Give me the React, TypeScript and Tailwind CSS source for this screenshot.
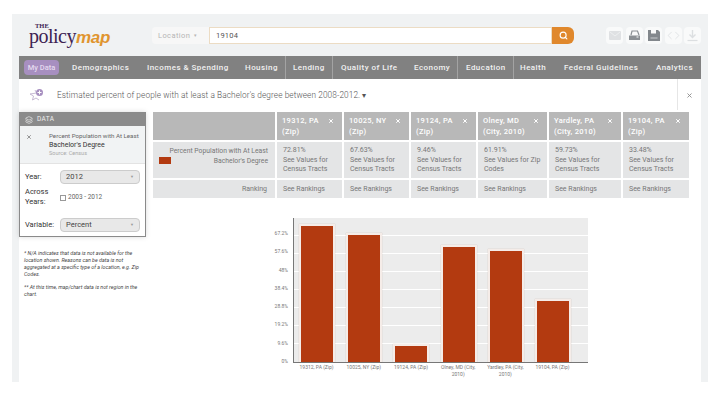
import type { ReactNode } from "react";
import { Search, Code, X, Layers } from "lucide-react";

const NAV = [
  { label: "Demographics", cls: "w-[79px] pl-[13px]" },
  { label: "Incomes & Spending", cls: "w-[99px] pl-[9px]" },
  { label: "Housing", cls: "w-[49px] pl-[8px] border-r border-[#a3a3a3]" },
  { label: "Lending", cls: "w-[47px] pl-[7px] border-r border-[#a3a3a3]" },
  { label: "Quality of Life", cls: "w-[73px] pl-[8px]" },
  { label: "Economy", cls: "w-[52px] pl-[8px] border-r border-[#a3a3a3]" },
  { label: "Education", cls: "w-[56px] pl-[8px] border-r border-[#a3a3a3]" },
  { label: "Health", cls: "w-[42px] pl-[6px]" },
  { label: "Federal Guidelines", cls: "w-[92px] pl-[8px]" },
  { label: "Analytics", cls: "w-[54px] pl-[8px]" },
];

const COLS = [
  { name: "19312, PA", sub: "(Zip)", value: "72.81%", note: "See Values for Census Tracts", w: "w-[65px]" },
  { name: "10025, NY", sub: "(Zip)", value: "67.63%", note: "See Values for Census Tracts", w: "w-[65px]" },
  { name: "19124, PA", sub: "(Zip)", value: "9.46%", note: "See Values for Census Tracts", w: "w-[65px]" },
  { name: "Olney, MD", sub: "(City, 2010)", value: "61.91%", note: "See Values for Zip Codes", w: "w-[69px]" },
  { name: "Yardley, PA", sub: "(City, 2010)", value: "59.73%", note: "See Values for Census Tracts", w: "w-[72px]" },
  { name: "19104, PA", sub: "(Zip)", value: "33.48%", note: "See Values for Census Tracts", w: "w-[66px]" },
];

const BARS = [
  { label: "19312, PA (Zip)", h: "h-[138px]" },
  { label: "10025, NY (Zip)", h: "h-[129px]" },
  { label: "19124, PA (Zip)", h: "h-[18px]" },
  { label: "Olney, MD (City, 2010)", h: "h-[117px]" },
  { label: "Yardley, PA (City, 2010)", h: "h-[113px]" },
  { label: "19104, PA (Zip)", h: "h-[63px]" },
];

const TICKS = ["67.2%", "57.6%", "48%", "38.4%", "28.8%", "19.2%", "9.6%", "0%"];

const ToolButton = ({ children }: { children: ReactNode }) => (
  <div className="w-[17px] h-[17px] rounded-sm bg-[#f9fafa] flex items-center justify-center text-[#dcdfe1]">
    {children}
  </div>
);

export default function App() {
  return (
    <div className="w-[720px] h-[405px] bg-white pt-[14px] px-[12px] overflow-hidden font-['Roboto',sans-serif]">
      <div className="w-[696px] h-[368px] bg-[#f0f2f3] flex flex-col">
        {/* top bar */}
        <div className="h-[42px] flex items-center shrink-0 relative">
          <div className="w-[140px] pl-[17px] relative h-full">
            <div className="absolute left-[23px] top-[9px] text-[6.5px] leading-[5px] font-bold text-[#3d2352] font-['Liberation_Serif',serif]">THE</div>
            <div className="pt-[14px] text-[20px] leading-[16px] tracking-[-0.5px] text-[#3d2352] font-['Liberation_Serif',serif]">
              policy<span className="italic font-bold text-[17px] tracking-[-0.3px] text-[#e0952f] font-['Liberation_Sans',sans-serif]">map</span>
            </div>
          </div>
          <div className="flex items-center h-[17px] w-[57px] mt-[1px] bg-[#f7f7f7] rounded-l-sm text-[#b5b5b5] text-[7.5px] tracking-[0.4px] pl-[6px]">
            Location <span className="ml-[4px] text-[5px]">▾</span>
          </div>
          <div className="h-[17px] w-[343px] mt-[1px] bg-white border border-[#ecdcc4] flex items-center pl-[6px] text-[7.5px] tracking-[0.2px] text-[#555]">
            19104
          </div>
          <div className="h-[17px] w-[22px] mt-[1px] bg-[#e0882c] rounded-r-md flex items-center justify-center text-white">
            <Search size={9} strokeWidth={3} />
          </div>
          <div className="flex gap-[2.5px] ml-[32px] mt-[1px]">
            <ToolButton>
              <svg width="12" height="9" viewBox="0 0 12 9"><rect width="12" height="9" rx="1" fill="#dfe1e3" /><path d="M1 1l5 4 5-4" fill="none" stroke="#eef0f1" strokeWidth="1" /></svg>
            </ToolButton>
            <ToolButton>
              <svg width="13" height="11" viewBox="0 0 13 11"><path d="M3 5L4 1h5.5L11 5" fill="none" stroke="#8b9094" strokeWidth="1.2" /><path d="M1 5.5h11V10H1z" fill="#8b9094" /><rect x="8.5" y="6.5" width="2" height="1" fill="#f9fafa" /></svg>
            </ToolButton>
            <ToolButton>
              <svg width="12" height="11" viewBox="0 0 12 11"><path d="M0 0h10l2 2v9H0z" fill="#82878c" /><rect x="3" y="0" width="5" height="3.5" fill="#f9fafa" /><rect x="2.5" y="7" width="7" height="2" fill="#a5a9ad" /></svg>
            </ToolButton>
            <ToolButton><Code size={13} strokeWidth={1.5} /></ToolButton>
            <ToolButton>
              <svg width="11" height="12" viewBox="0 0 11 12"><path d="M5.5 0v7M2.5 4.5l3 3 3-3" fill="none" stroke="#dcdfe1" strokeWidth="1.4" /><path d="M0.5 10.5h10" stroke="#dcdfe1" strokeWidth="1.2" /></svg>
            </ToolButton>
          </div>
        </div>

        <div className="pl-[7px] pr-[7px] flex-1 flex flex-col min-h-0">
          {/* nav */}
          <div className="h-[23px] bg-[#818181] flex items-center text-[8px] font-medium tracking-[0.45px] text-[#f1f1f1] shrink-0">
            <div className="ml-[5px] w-[35px] h-[15px] shrink-0 rounded-sm bg-[#a78fc0] text-[#e4d9ee] flex items-center justify-center text-[7.5px] tracking-normal">My Data</div>
            {NAV.map((n) => (
              <div key={n.label} className={`${n.cls} shrink-0 h-full flex items-center whitespace-nowrap`}>
                {n.label}
              </div>
            ))}
          </div>

          <div className="bg-white flex-1 flex flex-col min-h-0">
            {/* description */}
            <div className="h-[31px] flex items-center shrink-0 relative">
              <svg width="15" height="13" viewBox="0 0 15 13" className="ml-[10px] mr-[13px]">
                <path d="M6 2 L7.5 5 L1 6 L4.5 8 L3.5 12 L7 10 L10 12" fill="none" stroke="#b9a9c9" strokeWidth="0.8" />
                <circle cx="10.5" cy="4.5" r="3.5" fill="#a78fc0" />
                <path d="M8.5 4.5h4M10.5 2.5v4" stroke="white" strokeWidth="1" />
              </svg>
              <span className="text-[8.25px] font-light tracking-[0.1px] text-[#555] mt-[1px]">Estimated percent of people with at least a Bachelor's degree between 2008-2012. ▾</span>
              <div className="absolute right-0 top-0 h-full w-[24px] border-l border-[#e6e6e6] flex items-center justify-center text-[#8a8a8a]">
                <X size={7} strokeWidth={3} className="mt-[1px]" />
              </div>
            </div>

            <div className="flex flex-1 min-h-0 pt-[2px]">
              {/* left column */}
              <div className="w-[134px] shrink-0">
                <div className="w-[127px] border border-[#8a8a8a] shadow-[0_0_5px_rgba(0,0,0,0.15)]">
                  <div className="h-[13px] bg-[#8b8b8b] flex items-center pl-[5px] text-[6.5px] tracking-[0.4px] text-[#eee] gap-[3px]">
                    <Layers size={8} /> <span className="ml-[1px]">DATA</span>
                  </div>
                  <div className="h-[38px] bg-[#f1f3f4] flex text-[6.2px] leading-[8.5px] text-[#666] border-b border-[#e3e3e3]">
                    <X size={6} strokeWidth={3} className="ml-[6px] mt-[8px] mr-[17px] text-[#777] shrink-0" />
                    <div className="pt-[6px]">
                      <div>Percent Population with At Least</div>
                      <div className="text-[7px] text-[#333]">Bachelor's Degree</div>
                      <div className="text-[5.5px] text-[#aaa]">Source: Census</div>
                    </div>
                  </div>
                  <div className="h-[72px] bg-white text-[7.5px] text-[#333] pl-[5px] pt-[6px]">
                    <div className="flex items-center h-[14px]">
                      <span className="w-[35px]">Year:</span>
                      <div className="w-[80px] h-[14px] rounded-sm bg-[#e8e8e8] border border-[#ccc] flex items-center justify-between px-[5px] text-[#444]">
                        2012 <span className="text-[4px] text-[#999]">▼</span>
                      </div>
                    </div>
                    <div className="flex h-[34px] pt-[3px] leading-[9.5px]">
                      <span className="w-[35px]">Across Years:</span>
                      <div className="flex items-center h-[10px] mt-[6px] gap-[2px] text-[6.5px] text-[#666]">
                        <div className="w-[6px] h-[6px] border border-[#999] bg-white" /> 2003 - 2012
                      </div>
                    </div>
                    <div className="flex items-center h-[14px]">
                      <span className="w-[35px]">Variable:</span>
                      <div className="w-[80px] h-[14px] rounded-sm bg-[#e8e8e8] border border-[#ccc] flex items-center justify-between px-[5px] text-[#444]">
                        Percent <span className="text-[4px] text-[#999]">▼</span>
                      </div>
                    </div>
                  </div>
                </div>
                <div className="mt-[13px] pl-[5px] pr-[12px] italic text-[5.3px] leading-[7px] text-[#444]">
                  <p>* N/A indicates that data is not available for the location shown. Reasons can be data is not aggregated at a specific type of a location, e.g. Zip Codes.</p>
                  <p className="mt-[6px]">** At this time, map/chart data is not region in the chart.</p>
                </div>
              </div>

              {/* right column */}
              <div className="flex-1 min-w-0">
                <div className="flex gap-[2px]">
                  <div className="w-[122px] flex flex-col gap-[2px] shrink-0">
                    <div className="h-[28px] bg-[#b8b8b8]" />
                    <div className="h-[36px] bg-[#e4e5e6] relative pt-[5px] pr-[7px] text-right text-[6.8px] leading-[9.5px] text-[#777]">
                      <div className="absolute left-[6px] top-[15px] w-[12px] h-[7px] bg-[#b33a10]" />
                      Percent Population with At Least<br />Bachelor's Degree
                    </div>
                    <div className="h-[18px] bg-[#e4e5e6] flex items-center justify-end pr-[8px] text-[7px] text-[#777]">Ranking</div>
                  </div>
                  {COLS.map((c) => (
                    <div key={c.name} className={`${c.w} shrink-0 flex flex-col gap-[2px]`}>
                      <div className="h-[28px] bg-[#b8b8b8] text-white font-medium text-[7.5px] leading-[10.5px] tracking-[0.3px] pl-[5px] pt-[4px] relative">
                        {c.name}<br />{c.sub}
                        <X size={6} strokeWidth={4} className="absolute right-[8px] top-[6px]" />
                      </div>
                      <div className="h-[36px] bg-[#e4e5e6] pl-[6px] pr-[3px] pt-[4px] text-[7px] leading-[9.5px] text-[#777]">
                        {c.value}<br />{c.note}
                      </div>
                      <div className="h-[18px] bg-[#e4e5e6] flex items-center pl-[6px] text-[7px] text-[#777]">See Rankings</div>
                    </div>
                  ))}
                </div>

                {/* chart */}
                <div className="ml-[120px] mt-[20px] flex">
                  <div className="w-[20px] shrink-0 h-[146px] flex flex-col justify-between pt-[12px] items-end pr-[5px] text-[5px] leading-[6px] text-[#777]">
                    {TICKS.map((t) => <span key={t}>{t}</span>)}
                  </div>
                  <div className="w-[295px] shrink-0">
                    <div className="h-[145px] bg-[#ececec] border-l border-b border-[#777] relative flex items-end gap-[11.2px] pl-[5px]">
                      <div className="absolute inset-x-0 top-[17px] bottom-0 flex flex-col justify-between pb-[18px]">
                        {[0, 1, 2, 3, 4, 5, 6].map((i) => <div key={i} className="h-px bg-white" />)}
                      </div>
                      {BARS.map((b) => (
                        <div key={b.label} className={`${b.h} w-[36px] shrink-0 bg-[#b33a10] border-2 border-b-0 border-[#f5ece8] relative shadow-[0_0_1px_rgba(120,60,30,0.3)]`} />
                      ))}
                    </div>
                    <div className="flex text-[5px] leading-[7px] text-[#777] text-center">
                      {BARS.map((b) => <div key={b.label} className="w-[47.2px] shrink-0 px-[3px] pt-[1px]">{b.label}</div>)}
                    </div>
                  </div>
                </div>
              </div>
            </div>
          </div>
        </div>
      </div>
    </div>
  );
}
